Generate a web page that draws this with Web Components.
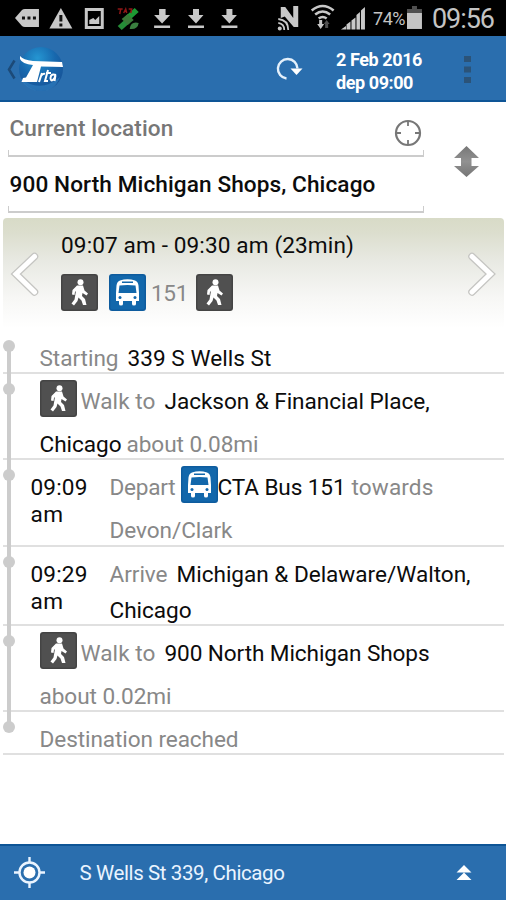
<!DOCTYPE html>
<html lang="en">
<head>
<meta charset="utf-8">
<title>Trip planner</title>
<style>
html,body{margin:0;height:100%;background:#fff}
body{font-family:Roboto,"Liberation Sans",sans-serif;font-size:22.600px;color:#0c0c0c;overflow:hidden}
</style>
</head>
<body>
<trip-app></trip-app>
<script>
const define = (name, html, setup) => customElements.define(name, class extends HTMLElement {
  connectedCallback() {
    if (this.shadowRoot) return;
    const t = document.createElement('template');
    t.innerHTML = typeof html === 'function' ? html(this) : html;
    this.attachShadow({mode: 'open'}).append(t.content.cloneNode(true));
    if (setup) setup(this);
  }
});

/* Page frame */
define('trip-app', `
<style>
:host{display:flex;flex-direction:column;width:506px;height:900px;background:#fff}
.space{flex:1}
</style>
<status-bar></status-bar>
<app-header></app-header>
<trip-form></trip-form>
<trip-summary></trip-summary>
<trip-steps></trip-steps>
<div class="space"></div>
<location-bar></location-bar>`);

define('status-bar', `
<style>
:host{display:block;height:36px;background:#000;color:#c4c4c4}
svg{display:block}
.row{display:flex;align-items:center;height:36px;padding:0 12px 0 15px;box-sizing:border-box}
.pct{font-size:18px;margin-left:8px;line-height:34px;padding-top:2px}
.clock{font-size:27px;margin-left:9px;line-height:34px;padding-top:2px}
</style>
<div class="row">
<svg width="326" height="36" viewBox="15 0 326 36" fill="#c8c8c8">
<path d="M15 18l7-8q1-1 3-1h14v18H25q-2 0-3-1z"/><path fill="#111" d="M22 16.500h3v3h-3zM27.500 16.500h3v3h-3zM33 16.500h3v3h-3z"/>
<path d="M61 8l11.500 20.500h-23z"/><path fill="#111" d="M59.500 15h3v6.500h-3zM59.500 23.500h3v3h-3z"/>
<path fill-rule="evenodd" d="M85 8h19v21H85zM88 11v15h13V11z"/><path d="M89.500 24v-4l4-2 2 2 4-4v8z"/>
<path d="M118 26l8-7 4 4-8 7z" fill="#258c37"/><path d="M125 17l10-9 4 4-10 9z" fill="#1d9a33"/><path d="M122 19l6-5 6 6-6 5z" fill="#3a7a38"/><path d="M130 29q1-8 9-6-1 7-9 6z" fill="#3a7f3f"/><path d="M118 9h5m-2 0-1 5m4-1 2-4 1 4m2-4h3l-1 4" stroke="#8f1616" stroke-width="1.500" fill="none"/>
<path d="M159.500 9h6.500v6h4.500l-8 8.500-8-8.500h5zM154.500 25.500h16v2.500h-16z"/>
<path d="M193.500 9h6v6h4.500l-7.500 8.500-8-8.500h5zM188.500 25.500h16v2.500h-16zM227 9h6v6h4.500l-7.500 8.500-8-8.500h5zM222 25.500h16v2.500h-16z"/>
<path d="M281.500 18V7h4.500l8 11V6h5v21h-4.500l-9-10.500z"/>
<g fill="none" stroke="#c8c8c8" stroke-width="1.800"><path d="M279 19q10 1 10 11M279 23q6 1 6 7"/></g><circle cx="280.500" cy="28.500" r="2"/>
<g fill="none" stroke="#c8c8c8" stroke-width="2.600"><path d="M312.500 10.500q11-9 22 0M316 14.500q7.500-6 15 0M319.500 18.500q4-3 8 0"/></g>
<path d="M320 20h3v4h2l-3.500 5-3.500-5h2z"/><path fill="#505050" d="M326 28v-4h-1.500l3-4 3 4H329v4z"/>
</svg>
<svg width="25" height="36" viewBox="341 0 25 36" fill="#c8c8c8"><path d="M342 29.500l5-3.500v3.500zM347.500 29.500v-5l4-3v8zM352.500 29.500v-9l4-3v12zM357.500 29.500V15l3.500-3v17.500zM362 29.500V10.500l4-3.500v22.500z"/></svg>
<fit-text class="pct" w="32">74%</fit-text>
<svg style="margin-left:1px" width="17" height="36" viewBox="407 0 17 36"><path fill="#505050" d="M413 6h5v3h5v5h-15V9h5z"/><path fill="#c4c4c4" d="M408 13h15v16h-15z"/></svg>
<fit-text class="clock" w="62">09:56</fit-text>
</div>`);

define('app-header', `
<style>
:host{display:flex;height:66px;box-sizing:border-box;background:#2a6eae;border-bottom:2px solid #0e5596;color:#fff;align-items:center;font-weight:700;font-size:18px}
.date{margin-left:32px;line-height:23px;width:88px;padding-top:5px}
.date div{height:23px;white-space:nowrap}
.logo{margin-left:6px}.reload{margin-left:208px}.more{margin-left:38px;margin-top:2px}
svg{display:block;flex:none}
</style>
<svg class="logo" width="60" height="60" viewBox="6 38 60 60">
<defs><radialGradient id="g" cx=".42" cy=".25" r=".8"><stop offset="0" stop-color="#2596d2"/><stop offset=".5" stop-color="#1768ae"/><stop offset="1" stop-color="#174f93"/></radialGradient></defs>
<path d="M14.500 60.500L9 69.500l5.500 9" fill="none" stroke="#1c4a78" stroke-width="2.500"/>
<circle cx="41" cy="69" r="22" fill="url(#g)"/><path d="M20 78q20 16 40-1-5 14-19 14T20 78z" fill="#3283c4" opacity=".6"/>
<path d="M20 56q3 4 13 5l29 1 1 5-22-.5-4 15.500H21.500l1.500-4 3-.5 7-12.500q-11-1-13-6z" fill="#fff"/>
<path d="M39 82l3-9m-1 3q2-3 4-2M48 70l-3 11h3m-2-8h5M56 75q-5-2-5.500 3 .5 5 4 0l1-3-1 6" fill="none" stroke="#fff" stroke-width="2"/>
</svg>
<svg class="reload" width="30" height="30" viewBox="274 54 30 30"><path d="M286.500 79.500A9.800 9.800 0 1 1 297.500 69.500" fill="none" stroke="#e4f0fb" stroke-width="2.400"/><path d="M290.500 69.500h12l-6 6.500z" fill="#fff"/></svg>
<div class="date"><div><fit-text w="86">2 Feb 2016</fit-text></div><div><fit-text w="77">dep 09:00</fit-text></div></div>
<svg class="more" width="12" height="32" viewBox="0 0 12 32" fill="#2b5378"><path d="M2 3h7v6H2zM2 13.500h7v6H2zM2 24h7v6H2z"/></svg>`);

/* Origin and destination */
define('trip-form', `
<style>
:host{display:flex;height:116px;background:#fff;font-weight:500}
.fields{width:416px;margin-left:8px;flex:none}
.swap{margin:44px 0 0 28px}
.grey{color:#777}
svg{display:block;flex:none}
</style>
<div class="fields">
<form-field class="grey"><fit-text w="164">Current location</fit-text>
<svg slot="end" width="28" height="28" viewBox="0 0 28 28" fill="none" stroke="#777" stroke-width="2.200"><circle cx="14" cy="14" r="12"/><path d="M14 2v5M14 21v5M2 14h5M21 14h5" stroke-width="1.800"/></svg></form-field>
<form-field><fit-text w="366">900 North Michigan Shops, Chicago</fit-text></form-field>
</div>
<svg class="swap" width="28" height="32" viewBox="0 0 28 32"><defs><linearGradient id="s" x2="0" y2="1"><stop stop-color="#777"/><stop offset=".5" stop-color="#919191"/><stop offset="1" stop-color="#757575"/></linearGradient></defs><path fill="url(#s)" d="M14.500 0L27 12h-7.500v8H27L14.500 31 2 20h7v-8H2z"/></svg>`);

define('form-field', `
<style>
:host{display:block;height:56px;box-sizing:border-box}
.box{height:55px;box-sizing:border-box;border-bottom:2px solid #ccc;display:flex;justify-content:space-between;align-items:flex-start;padding:14px 2px 0 1.500px;line-height:26px;
background:linear-gradient(#ccc,#ccc) 0 100%/1px 5px no-repeat,linear-gradient(#ccc,#ccc) 100% 100%/1px 5px no-repeat}
::slotted(svg){display:block;margin-top:3px}
</style><div class="box"><slot></slot><slot name="end"></slot></div>`);

/* Transport mode tile */
define('mode-icon', el => `
<style>
:host{display:block;width:37px;height:37px;flex:none}
svg{display:block}
</style>` + (el.getAttribute('mode') === 'bus'
? `<svg width="37" height="37" viewBox="0 0 37 37"><rect width="37" height="37" rx="3" fill="#0e5c9e"/><rect x="1.500" y="1.500" width="34" height="34" rx="2" fill="#1267ab"/><path fill="#fff" d="M11 6.500q7.500-2.500 15 0 3 1 3.500 5l.500 7.500v8h-3v3q0 1.500-2 1.500T23 30v-3h-9v3q0 1.500-2 1.500T10 30v-3H7v-8l.500-7.500q.5-4 3.500-5z"/><path fill="#1267ab" d="M13 7.500h11v1.500H13zM10.500 11.500q8-1 16 0l1 7.500h-18z"/><circle cx="11" cy="23.500" r="1.500" fill="#1267ab"/><circle cx="26" cy="23.500" r="1.500" fill="#1267ab"/></svg>`
: `<svg width="37" height="37" viewBox="0 0 37 37"><rect width="37" height="37" rx="3" fill="#444"/><rect x="1.500" y="1.500" width="34" height="34" rx="2" fill="#505050"/><circle cx="19.500" cy="8.300" r="3" fill="#fff"/><path fill="#fff" d="M16 11.500h6l1.500 5 3.500 3-1.500 2-4-2.500-.500 3 3 3 1.500 6h-3.500l-1.500-4.500-3-3-1 3.500-3.500 4.500-2.500-2 3-4 1.500-8.500-1 1-.5 3-2.500-.5.500-4.500z"/></svg>`));

define('trip-summary', `
<style>
:host{display:flex;justify-content:space-between;height:113px;margin:0 2px 0 3px;border-radius:4px 4px 0 0;background:linear-gradient(#d8dbc7 0,#dcdece 15px,#e9eae4 45px,#f7f7f5 80px,#fff 110px)}
svg{display:block;margin-top:34px;flex:none}
.mid{flex:1;padding:14px 0 0 22px}
.line{line-height:27px;height:27px}
.modes{display:flex;margin-top:15px;align-items:center}
.num{color:#888;margin:1px 8px 0 5px}
mode-icon+mode-icon{margin-left:11px}
</style>
<svg width="36" height="44" viewBox="0 0 36 44" fill="none" stroke-linejoin="miter" stroke-linecap="round"><path d="M31.500 4.500L13 22 31.500 40" stroke="#c5c5c2" stroke-width="7.500"/><path d="M31.500 4.500L13 22 31.500 40" stroke="#fff" stroke-width="5"/></svg>
<div class="mid"><div class="line"><fit-text w="293">09:07 am - 09:30 am (23min)</fit-text></div>
<div class="modes"><mode-icon mode="walk"></mode-icon><mode-icon mode="bus"></mode-icon><fit-text class="num" w="37">151</fit-text><mode-icon mode="walk"></mode-icon></div></div>
<svg width="40" height="44" viewBox="0 0 40 44" fill="none" stroke-linecap="round"><path d="M8 4.500L26.500 22 8 40" stroke="#c5c5c2" stroke-width="7.500"/><path d="M8 4.500L26.500 22 8 40" stroke="#fff" stroke-width="5"/></svg>`);

/* One itinerary row with its timeline marker */
define('trip-step', `
<style>
:host{display:flex;box-sizing:border-box;position:relative;margin:0 2px 0 3px;padding:13.500px 0 0 36.500px;border-bottom:2px solid #e0e0e0;line-height:27px}
:host([timed]){padding-left:27.500px}
.rail{position:absolute;left:4px;top:0;bottom:-2px;width:4px;background:#ccc}
:host([first]) .rail{top:15px}
:host([last]) .rail{bottom:auto;height:15px}
.dot{position:absolute;left:0;top:9px;width:12px;height:12px;border-radius:6px;background:#ccc}
.time{display:none;width:79px}
:host([timed]) .time{display:block}
.lines{display:flex;flex-direction:column;gap:var(--gap,16px)}
</style>
<div class="rail"></div><div class="dot"></div>
<div class="time"><slot name="time"></slot></div>
<div class="lines"><slot></slot></div>`);

define('step-line', `
<style>
:host{display:flex;height:27px;white-space:nowrap}
::slotted(mode-icon){margin:-8px 0 -2px}
</style><slot></slot>`);

define('trip-steps', `
<style>
:host{display:block}
.g{color:#888}
.s{margin-left:9px}
[slot=time] fit-text{display:block}
</style>
<trip-step first style="height:43px"><step-line><fit-text class="g" w="79">Starting</fit-text><fit-text class="s" w="144">339 S Wells St</fit-text></step-line></trip-step>
<trip-step style="height:86px">
<step-line><mode-icon mode="walk"></mode-icon><fit-text class="g" style="margin-left:4px" w="75">Walk to</fit-text><fit-text class="s" w="265">Jackson &amp; Financial Place,</fit-text></step-line>
<step-line><fit-text w="82">Chicago</fit-text><fit-text class="g" style="margin-left:5px" w="132">about 0.08mi</fit-text></step-line></trip-step>
<trip-step timed style="height:87px"><div slot="time"><fit-text w="57">09:09</fit-text><fit-text w="33">am</fit-text></div>
<step-line><fit-text class="g" w="66">Depart</fit-text><mode-icon mode="bus" style="margin-left:5px"></mode-icon><fit-text w="128">CTA Bus 151</fit-text><fit-text class="g" style="margin-left:6px" w="82">towards</fit-text></step-line>
<step-line><fit-text class="g" w="123">Devon/Clark</fit-text></step-line></trip-step>
<trip-step timed style="height:79px;--gap:9px"><div slot="time"><fit-text w="57">09:29</fit-text><fit-text w="33">am</fit-text></div>
<step-line><fit-text class="g" w="58">Arrive</fit-text><fit-text style="margin-left:9px" w="294">Michigan &amp; Delaware/Walton,</fit-text></step-line>
<step-line><fit-text w="82">Chicago</fit-text></step-line></trip-step>
<trip-step style="height:86px">
<step-line><mode-icon mode="walk"></mode-icon><fit-text class="g" style="margin-left:4px" w="75">Walk to</fit-text><fit-text class="s" w="265">900 North Michigan Shops</fit-text></step-line>
<step-line><fit-text class="g" w="132">about 0.02mi</fit-text></step-line></trip-step>
<trip-step last style="height:43px"><step-line><fit-text class="g" w="199">Destination reached</fit-text></step-line></trip-step>`);

define('location-bar', `
<style>
:host{display:flex;align-items:center;box-sizing:border-box;height:56px;background:#2a6eae;border-top:2px solid #0e5596;color:#eaf4ff;padding:0 30px 0 14px;font-size:20.500px}
.t{margin-left:33.500px;line-height:28px}
.up{margin-left:auto}
svg{display:block;flex:none}
</style>
<svg width="32" height="32" viewBox="0 0 32 32" fill="none" stroke="#eaf4ff" stroke-width="2.400"><circle cx="15.500" cy="15.500" r="10"/><circle cx="15.500" cy="15.500" r="6" fill="#fff" stroke="none"/><path d="M15.500 0v6M15.500 25v6M0 15.500h6M25 15.500h6"/></svg>
<fit-text class="t" w="205">S Wells St 339, Chicago</fit-text>
<svg class="up" width="24" height="20" viewBox="0 0 24 20" fill="#fff"><path d="M12 2l7.500 7.500h-15zM12 9.500l7.500 7.500h-15z"/></svg>`);

/* Text run tracked so that its advance equals the w attribute, in pixels */
define('fit-text', `
<style>:host{display:inline-block;white-space:nowrap;flex:none}span{display:inline-block}</style><span><slot></slot></span>`, el => {
  const span = el.shadowRoot.querySelector('span');
  const n = el.textContent.length, w = +el.getAttribute('w');
  const d = (w - span.getBoundingClientRect().width) / n;
  span.style.letterSpacing = d.toFixed(3) + 'px';
});
</script>
</body>
</html>
